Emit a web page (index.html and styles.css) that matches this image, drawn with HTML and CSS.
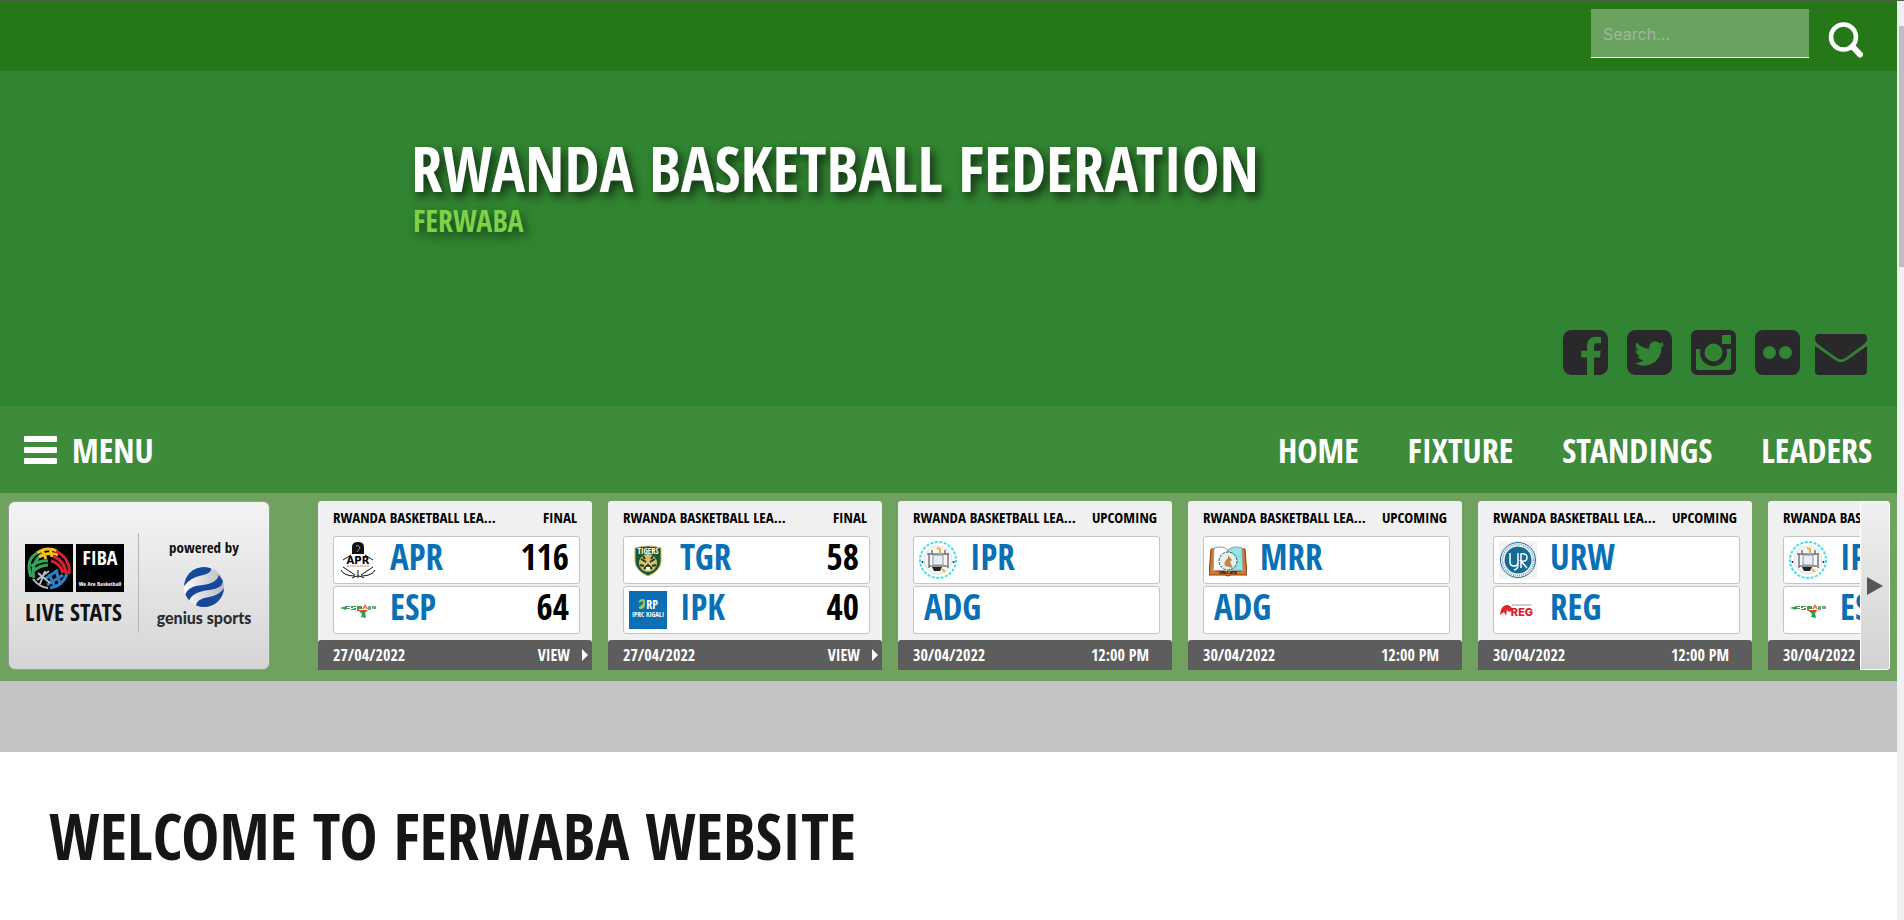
FILE: index.html
```
<!DOCTYPE html>
<html lang="en">
<head>
<meta charset="utf-8">
<title>Rwanda Basketball Federation</title>
<link rel="stylesheet" href="styles.css">
</head>
<body>
<svg class="defs" aria-hidden="true">
  <symbol id="ipr" viewBox="0 0 38 38">
    <circle cx="19" cy="19" r="18" fill="none" stroke="#3fe0e6" stroke-width="2" stroke-dasharray="3 1.5"/>
    <circle cx="19" cy="19" r="14" fill="#f6f6f4" stroke="#dde3e8"/>
    <path d="M10 12v15M29 12v15M8 13h22M10 25h18M13 9v5M26 9v5" fill="none" stroke="#777" stroke-width="1.500"/>
    <path d="M14 14h10v10h-10z" fill="#e8edf6" stroke="#8a93a8"/>
    <path d="M13 26h10l-2 4h-6z" fill="#222"/>
    <path d="M18 7l3 1v5M23 28l3 3" fill="none" stroke="#e5b54a" stroke-width="2"/>
    <circle cx="3.500" cy="21" r="1" fill="#225"/><circle cx="34.500" cy="21" r="1" fill="#225"/>
  </symbol>
  <symbol id="esp" viewBox="0 0 38 38">
    <path d="M1 17l6-2v4zM6 15h5v1H8v1h3v1H6zM12 15h5v1h-3v1h3v2h-5v-1h3v-1h-3zM18 15h5v3h-3v1h-2z" fill="#3f9a55"/>
    <path d="M23 18l3-5 3 5h-2l-1-2-1 2z" fill="#ee6a32"/>
    <path d="M29 15h3v4h-3zM33 15h4v3h-4z" fill="#74a878"/>
    <path d="M18 19h11l-2 1h-8z" fill="#d8432e"/>
    <path d="M20 20h8l-2 2 1 5-5-1 1-3z" fill="#2f9f4b"/>
  </symbol>
</svg>
<div class="page">
  <div class="content">
    <div class="topbar">
      <form class="search">
        <input class="search-field" type="text" placeholder="Search..." aria-label="Search">
        <button class="search-button" type="button" aria-label="Search">
          <svg width="36" height="36" viewBox="0 0 36 36"><circle cx="15.500" cy="15" r="12.500" fill="none" stroke="#fff" stroke-width="4.500"/><path d="M24.500 24.500l7.500 8" stroke="#fff" stroke-width="6" stroke-linecap="round"/></svg>
        </button>
      </form>
    </div>
    <header class="header">
      <div class="brand">
        <h1 class="site-title">RWANDA BASKETBALL FEDERATION</h1>
        <p class="site-tag">FERWABA</p>
      </div>
      <div class="social">
        <a href="#facebook" aria-label="Facebook"><svg width="45" height="45" viewBox="0 128 1536 1536"><path d="M1248 128q119 0 203.500 84.500t84.500 203.500v960q0 119-84.500 203.500t-203.500 84.500h-188v-595h199l30-232h-229v-148q0-56 23.500-84t91.500-28l122-1v-207q-63-9-178-9-136 0-217.500 80t-81.500 226v171h-200v232h200v595h-532q-119 0-203.500-84.500t-84.500-203.500v-960q0-119 84.500-203.500t203.500-84.500h960z"/></svg></a>
        <a href="#twitter" aria-label="Twitter"><svg width="45" height="45" viewBox="0 128 1536 1536"><path d="M1280 610q-56 25-121 34 68-40 93-117-65 38-134 51-61-66-153-66-87 0-148.500 61.500t-61.500 148.500q0 29 5 48-129-7-242-65t-192-155q-29 50-29 106 0 114 91 175-47-1-100-26v2q0 75 50 133.500t123 72.500q-29 8-51 8-13 0-39-4 21 63 74.500 104t121.500 42q-116 90-261 90-26 0-50-3 148 94 322 94 112 0 210-35.500t168-95 120.500-137 75-162 24.500-168.500q0-18-1-27 63-45 105-109zM1536 416v960q0 119-84.500 203.500t-203.500 84.500h-960q-119 0-203.500-84.500t-84.500-203.500v-960q0-119 84.500-203.500t203.500-84.500h960q119 0 203.500 84.500t84.500 203.500z"/></svg></a>
        <a href="#instagram" aria-label="Instagram"><svg width="45" height="45" viewBox="0 0 45 45"><path fill-rule="evenodd" d="M6 0h33a6 6 0 0 1 6 6v33a6 6 0 0 1-6 6H6a6 6 0 0 1-6-6V6a6 6 0 0 1 6-6zM32 5q-1 0-1 1v7q0 1 1 1h7q1 0 1-1V6q0-1-1-1zM5 19v19q0 2 2 2h31q2 0 2-2V19h-4.500a13.500 13.500 0 1 1-26 0zM22.500 13.500a9 9 0 1 0 0 18a9 9 0 1 0 0-18z"/></svg></a>
        <a href="#flickr" aria-label="Flickr"><svg width="45" height="45" viewBox="0 0 45 45"><path fill-rule="evenodd" d="M8 0h29a8 8 0 0 1 8 8v29a8 8 0 0 1-8 8H8a8 8 0 0 1-8-8V8a8 8 0 0 1 8-8zM14.500 16a6.500 6.500 0 1 0 0 13a6.500 6.500 0 1 0 0-13zM30.500 16a6.500 6.500 0 1 0 0 13a6.500 6.500 0 1 0 0-13z"/></svg></a>
        <a class="mail" href="#mail" aria-label="Email"><svg width="52" height="45" viewBox="0 0 52 45"><path d="M4 4h44q4 0 4 4v1q0 3-4 6L31 27.500q-5 4-10 0L4 15q-4-3-4-6V8q0-4 4-4zM0 16l20 14q6 4.500 12 0l20-14v25q0 4-4 4H4q-4 0-4-4z"/></svg></a>
      </div>
    </header>
    <nav class="nav">
      <button class="menu" type="button"><span class="bars"><i></i><i></i><i></i></span>MENU</button>
      <div class="links"><a href="#home">HOME</a><a href="#fixture">FIXTURE</a><a href="#standings">STANDINGS</a><a href="#leaders">LEADERS</a></div>
    </nav>
    <section class="ticker">
      <a class="sponsor" href="#livestats">
        <span class="fiba">
          <span class="fiba-tiles">
            <svg width="48" height="48" viewBox="0 0 48 48"><path fill="#000" d="M0 0h48v48H0z"/><g fill="none" stroke-width="3">
              <path stroke="#2fa55a" d="M6 33Q0 16 12 9M9 34Q5 20 17 10M6 22q10-6 17-5M7 28q8-7 16-7"/>
              <path stroke="#f3c21e" d="M12 9Q22 2 32 7M14 13q10-6 19-2M17 6l4 9M25 5l2 8"/>
              <path stroke="#d91f32" d="M31 7q15 8 13 23M28 12q12 5 13 18M26 17q9 2 12 12"/>
              <path stroke="#2a7fc4" d="M42 30q-4 12-17 14M24 30l6 13M31 26l4 14M20 35l13-9M22 41l16-10"/>
              <path stroke="#b9bec2" stroke-width="2" d="M8 35q6 8 15 9M13 29l12 10M12 36l12-9M15 40l5-13"/></g></svg>
            <span class="fiba-tile"><b>FIBA</b><small>We Are Basketball</small></span>
          </span>
          <strong class="live">LIVE STATS</strong>
        </span>
        <span class="genius">
          <span class="powered">powered by</span>
          <svg width="42" height="42" viewBox="0 0 42 42"><defs><clipPath id="ball"><circle cx="21" cy="21" r="20"/></clipPath><linearGradient id="silver"><stop offset="0" stop-color="#fff"/><stop offset="1" stop-color="#b5b7bd"/></linearGradient></defs><g clip-path="url(#ball)"><path fill="url(#silver)" d="M0 0h42v42H0z"/><path fill="#15479b" d="M0 22V4Q14-6 28 2Q29 7 20 9Q5 12 0 22zM2 30Q4 20 20 19Q34 17 36 9L40 15Q39 23 26 24Q9 26 6 35zM13 40Q13 33 26 31Q38 29 42 20V38L24 43z"/></g></svg>
          <b class="genius-name">genius sports</b>
        </span>
      </a>
      <div class="games">
        <article class="game">
          <div class="game-head"><span>RWANDA BASKETBALL LEA...</span><span>FINAL</span></div>
          <div class="team"><svg width="38" height="38" viewBox="0 0 38 38"><path d="M13 13V6q0-5 6-5t6 5v7z" fill="#111"/><path d="M17 5q3-2 4 2l-3 4" fill="none" stroke="#999"/><path d="M12 14l-8 5M26 14l8 5M4 26l12 8M34 26l-12 8M2 29q3 6 14 6M36 29q-3 6-14 6M19 29v8M13 37q6-4 12 0" fill="none" stroke="#111"/><path d="M8 25h22" stroke="#d97b4b" stroke-dasharray="2 .5"/><text x="19" y="23" text-anchor="middle" font-family="DejaVu Sans" font-size="10" font-weight="700">APR</text></svg><span>APR</span><b>116</b></div>
          <div class="team"><svg width="38" height="38"><use href="#esp"/></svg><span>ESP</span><b>64</b></div>
          <a class="game-foot" href="#g1"><span>27/04/2022</span><span>VIEW</span><i class="more"></i></a>
        </article>
        <article class="game">
          <div class="game-head"><span>RWANDA BASKETBALL LEA...</span><span>FINAL</span></div>
          <div class="team"><svg width="38" height="38" viewBox="0 0 38 38"><path d="M6 7q13-4 26 0v14q-1 9-13 14Q7 30 6 21z" fill="#175b35" stroke="#d5b95a"/><circle cx="19" cy="22" r="9" fill="#d9bd68"/><path d="M12 18l5 3M26 18l-5 3M15 28l4-4 4 4M11 24l4 1M27 24l-4 1M14 15l2 3M24 15l-2 3" stroke="#173d28" stroke-width="2" fill="none"/><path d="M17 26h4v3h-4z" fill="#fff"/><text x="19" y="13" text-anchor="middle" font-family="Open Sans Condensed" font-size="8" font-weight="700" fill="#fff">TIGERS</text></svg><span>TGR</span><b>58</b></div>
          <div class="team"><svg width="38" height="38" viewBox="0 0 38 38"><path d="M0 0h38v38H0z" fill="#0c6fb4"/><path d="M10 11q5-4 5 0t-5 6M11 17q4 0 4-4" fill="none" stroke="#9bcf54" stroke-width="2"/><text x="23" y="18" text-anchor="middle" font-family="Open Sans Condensed" font-size="12" font-weight="700" fill="#fff">RP</text><text x="19" y="26" text-anchor="middle" font-family="Open Sans Condensed" font-size="7" font-weight="700" fill="#fff">IPRC KIGALI</text></svg><span>IPK</span><b>40</b></div>
          <a class="game-foot" href="#g2"><span>27/04/2022</span><span>VIEW</span><i class="more"></i></a>
        </article>
        <article class="game">
          <div class="game-head"><span>RWANDA BASKETBALL LEA...</span><span>UPCOMING</span></div>
          <div class="team"><svg width="38" height="38"><use href="#ipr"/></svg><span>IPR</span></div>
          <div class="team"><span>ADG</span></div>
          <div class="game-foot"><span>30/04/2022</span><span>12:00 PM</span></div>
        </article>
        <article class="game">
          <div class="game-head"><span>RWANDA BASKETBALL LEA...</span><span>UPCOMING</span></div>
          <div class="team"><svg width="38" height="38" viewBox="0 0 38 38"><path d="M2 8h4v22h26V8h4l2 26H22l-3 1-3-1H0z" fill="#dd7427" stroke="#754018"/><path d="M5 7q9-3 14 2v22q-6-3-15-1z" fill="#fff" stroke="#999"/><path d="M19 9q6-5 14-2l1 23q-9-2-15 1z" fill="#8fe6e3" stroke="#999"/><circle cx="19" cy="20" r="9" fill="#e8f2ec" stroke="#245a61" stroke-dasharray="3 1"/><path d="M16 25q-2-4 3-8v-3l4 5-2 2 3 6z" fill="#bf8747"/><text x="19" y="33" text-anchor="middle" font-family="Open Sans Condensed" font-size="4" font-weight="700">SINCE 2014</text></svg><span>MRR</span></div>
          <div class="team"><span>ADG</span></div>
          <div class="game-foot"><span>30/04/2022</span><span>12:00 PM</span></div>
        </article>
        <article class="game">
          <div class="game-head"><span>RWANDA BASKETBALL LEA...</span><span>UPCOMING</span></div>
          <div class="team"><svg width="38" height="38" viewBox="0 0 38 38"><path d="M0 0h38v38H0z" fill="#f3f3f3"/><circle cx="19" cy="19" r="17.500" fill="#fff" stroke="#206b91"/><circle cx="19" cy="19" r="15.500" fill="none" stroke="#75a5bd" stroke-width="2" stroke-dasharray="1 1"/><circle cx="19" cy="19" r="13.500" fill="#146b94"/><path d="M11 12v9q0 4 4 4t4-4v-9M19 12v12q0 4-4 5M22 27V13q6-1 6 3.500T22 20l6 7" fill="none" stroke="#fff" stroke-width="1.500"/></svg><span>URW</span></div>
          <div class="team"><svg width="38" height="38" viewBox="0 0 38 38"><path d="M1 24Q2 13 9 14q5 2 4 6l-3 1-2-2-1 6-2-4z" fill="#e2232f"/><path d="M13 14h20" stroke="#888" stroke-dasharray="2 .5"/><text x="23" y="25" text-anchor="middle" font-family="Inter" font-size="11" font-weight="800" fill="#d9202d">REG</text></svg><span>REG</span></div>
          <div class="game-foot"><span>30/04/2022</span><span>12:00 PM</span></div>
        </article>
        <article class="game">
          <div class="game-head"><span>RWANDA BASKETBALL LEA...</span><span>UPCOMING</span></div>
          <div class="team"><svg width="38" height="38"><use href="#ipr"/></svg><span>IPR</span></div>
          <div class="team"><svg width="38" height="38"><use href="#esp"/></svg><span>ESP</span></div>
          <div class="game-foot"><span>30/04/2022</span><span>12:00 PM</span></div>
        </article>
      </div>
      <button class="next" type="button" aria-label="Next games"><svg width="16" height="18" viewBox="0 0 16 18"><path d="M0 0l16 9-16 9z" fill="#555"/></svg></button>
    </section>
    <div class="band"></div>
    <main class="main"><h2 class="welcome">WELCOME TO FERWABA WEBSITE</h2></main>
  </div>
  <div class="scroll"><div class="thumb"></div></div>
</div>
</body>
</html>
```
FILE: styles.css
```
* { box-sizing: border-box; }
body { margin: 0; background: #fff; font-family: "Open Sans Condensed", "Roboto Condensed", sans-serif; font-weight: 700; }
a { color: inherit; text-decoration: none; }
button { border: 0; padding: 0; background: none; font: inherit; color: inherit; cursor: pointer; }
svg { display: block; flex: none; }
.defs { display: none; }
.page { display: flex; min-height: 100vh; border-top: 1px solid #4a6544; }
.content { flex: 1; min-width: 0; }
.scroll { width: 7px; padding: 25px 0 0 2px; background: #f0f0f2; }
.thumb { height: 241px; background: #bfbdbf; }

.topbar { height: 70px; padding: 8px 33px 0 0; background: #257718; }
.search { display: flex; justify-content: flex-end; gap: 19px; }
.search-field { width: 218px; height: 49px; padding: 2px 12px 0; border: 0; border-bottom: 1px solid #fff; border-radius: 0; background: #6aa35f; color: #fff; font: 400 16px Inter, sans-serif; }
.search-field::placeholder { color: #a2b79c; opacity: 1; }
.search-button { padding-top: 12px; }

.header { display: flex; flex-direction: column; justify-content: space-between; min-height: 335px; padding: 60px 30px 31px 411px; background: #318431; }
.site-title { margin: 0; font-size: 63px; line-height: 74px; color: #fff; text-shadow: 4px 5px 10px rgba(0, 0, 0, .65); white-space: nowrap; }
.site-tag { margin: 0; padding-left: 2px; font-size: 30px; line-height: 32px; color: #7dd348; text-shadow: 4px 5px 10px rgba(0, 0, 0, .5); }
.social { display: flex; justify-content: flex-end; gap: 19px; fill: #29292b; }
.mail { margin-left: -4px; }

.nav { display: flex; justify-content: space-between; align-items: center; min-height: 87px; padding: 0 25px 0 24px; background: #3e8b3c; color: #fff; font-size: 34px; line-height: 48px; }
.menu { display: flex; align-items: center; gap: 15px; }
.bars { display: grid; gap: 5px; width: 33px; }
.bars i { height: 6px; border-radius: 1px; background: #fff; }
.links { display: flex; gap: 49px; }

.ticker { display: flex; padding: 8px 7px 11px 8px; background: #6fa25f; }
.sponsor { display: flex; flex: none; width: 262px; height: 169px; margin-right: 48px; padding: 31px 14px 36px 16px; border: 1px solid #999; border-radius: 7px; background: linear-gradient(#f4f4f4, #d5d5d5); color: #111; }
.fiba { display: flex; flex: none; flex-direction: column; gap: 4px; width: 114px; padding: 11px 0 0; border-right: 1px solid #b5b5b5; }
.fiba-tiles { display: flex; gap: 3px; }
.fiba-tile { display: flex; flex-direction: column; align-items: center; justify-content: space-between; width: 48px; height: 48px; padding: 2px 0 4px; background: #000; color: #fff; }
.fiba-tile b { font-size: 20px; line-height: 24px; }
.fiba-tile small { font-size: 6px; line-height: 8px; }
.live { font-size: 24px; line-height: 32px; white-space: nowrap; }
.genius { display: flex; flex: 1; flex-direction: column; align-items: center; padding-left: 14px; white-space: nowrap; }
.powered { padding: 4px 0 9px; font-size: 15px; line-height: 20px; }
.genius-name { font: 900 16px/20px Lato, sans-serif; color: #2c2c32; }

.games { display: flex; flex: 1; gap: 16px; min-width: 0; overflow: hidden; }
.game { display: flex; flex: none; flex-direction: column; width: 274px; height: 169px; border-radius: 3px 3px 0 0; background: #f0f0f0; color: #000; }
.game-head { display: flex; justify-content: space-between; height: 35px; padding: 0 15px; font-size: 15px; line-height: 32px; white-space: nowrap; }
.team { display: flex; align-items: center; height: 48px; margin: 0 12px 2px 15px; padding: 0 10px 0 5px; border: 1px solid #c4c4c4; border-radius: 3px; background: #fff; font-size: 35px; line-height: 40px; }
.team span { padding: 0 0 6px 13px; color: #0a70b5; }
.team > span:first-child { padding-left: 5px; }
.team b { margin-left: auto; padding-bottom: 6px; }
.game-foot { display: flex; align-items: center; gap: 12px; height: 30px; margin-top: auto; padding: 0 23px 0 15px; border-radius: 3px 3px 0 0; background: #5d5d5d; color: #fff; font-size: 16px; line-height: 28px; }
.game-foot span:first-child { margin-right: auto; }
.more { width: 6px; height: 12px; margin-right: -19px; background: #fff; clip-path: polygon(0 0, 100% 50%, 0 100%); }
.next { display: grid; place-items: center; flex: none; width: 30px; height: 169px; border: 1px solid #fff; border-radius: 0 3px 3px 0; background: linear-gradient(#f0f0f0, #d2d2d2); }

.band { height: 71px; background: #c4c4c4; }
.main { padding: 42px 49px; }
.welcome { margin: 0; font-size: 64px; line-height: 84px; color: #161616; }
```
